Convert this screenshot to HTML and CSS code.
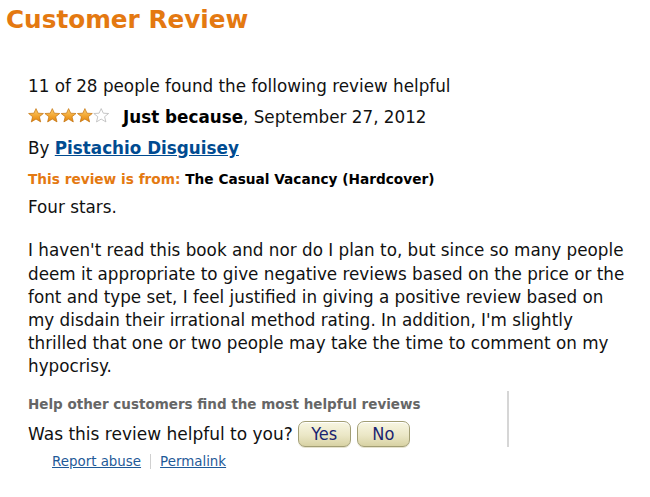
FILE: index.html
```html
<!DOCTYPE html>
<html>
<head>
<meta charset="utf-8">
<link rel="stylesheet" href="styles.css">
</head>
<body>
<h1 class="title">Customer Review</h1>
<div class="review">
  <div class="helpful-count">11 of 28 people found the following review helpful</div>
  <div class="headline"><span class="stars"><svg width="82" height="15" viewBox="0 0 82 15">
        <defs>
          <linearGradient id="g" x1="0" y1="0" x2="0" y2="1">
            <stop offset="0" stop-color="#fdd070"/>
            <stop offset="0.6" stop-color="#f1a22c"/>
            <stop offset="1" stop-color="#e0820c"/>
          </linearGradient>
          <path id="s" d="M8 0.6 L10.1 5.2 L15.4 5.5 L11.4 8.7 L12.7 13.9 L8 11.1 L3.3 13.9 L4.6 8.7 L0.6 5.5 L5.9 5.2 Z"/>
        </defs>
        <use href="#s" x="0" fill="url(#g)" stroke="#c2700a" stroke-width="0.7"/>
        <use href="#s" x="16.3" fill="url(#g)" stroke="#c2700a" stroke-width="0.7"/>
        <use href="#s" x="32.6" fill="url(#g)" stroke="#c2700a" stroke-width="0.7"/>
        <use href="#s" x="48.9" fill="url(#g)" stroke="#c2700a" stroke-width="0.7"/>
        <use href="#s" x="65.2" fill="#fff" stroke="#b8b8b8" stroke-width="0.8"/>
      </svg></span><b>Just because</b>, September 27, 2012</div>
  <div class="byline">By <a href="#" class="author">Pistachio Disguisey</a></div>
  <div class="from"><span class="from-label">This review is from:</span> The Casual Vacancy (Hardcover)</div>
  <div class="summary">Four stars.</div>
  <p class="body">I haven't read this book and nor do I plan to, but since so many people<br>deem it appropriate to give negative reviews based on the price or the<br>font and type set, I feel justified in giving a positive review based on<br>my disdain their irrational method rating. In addition, I'm slightly<br>thrilled that one or two people may take the time to comment on my<br>hypocrisy.</p>
  <div class="vote-box">
    <div class="vote-title">Help other customers find the most helpful reviews</div>
    <div class="vote-row"><span class="vote-q">Was this review helpful to you?</span><button class="btn">Yes</button><button class="btn">No</button></div>
  </div>
  <div class="links"><a href="#">Report abuse</a><span class="sep"></span><a href="#">Permalink</a></div>
</div>
</body>
</html>
```
FILE: styles.css
```css
html, body {
  margin: 0;
  padding: 0;
  background: #fff;
}
body {
  font-family: "DejaVu Sans", Verdana, sans-serif;
  color: #111;
  width: 650px;
  height: 497px;
  overflow: hidden;
}
.title {
  margin: 0;
  padding: 5px 0 0 6px;
  font-size: 24.7px;
  font-weight: bold;
  color: #e47911;
  line-height: 30px;
}
.review {
  padding: 39px 0 0 28px;
  font-size: 16.8px;
}
.helpful-count {
  line-height: 24px;
}
.headline {
  margin-top: 7px;
  line-height: 24px;
}
.headline b {
  color: #000;
}
.stars {
  display: inline-block;
  width: 82px;
  height: 15px;
  margin: 0 13px 0 0;
  vertical-align: 0px;
}
.stars svg {
  display: block;
}
.byline {
  margin-top: 7px;
  line-height: 24px;
}
.author {
  color: #004b91;
  font-weight: bold;
  text-decoration: underline;
}
.from {
  margin-top: 9px;
  font-size: 13.7px;
  font-weight: bold;
  line-height: 20px;
  color: #000;
}
.from-label {
  color: #e47911;
}
.summary {
  margin-top: 7px;
  line-height: 23.4px;
}
.body {
  margin: 20px 0 0 0;
  line-height: 23.2px;
  white-space: nowrap;
}
.vote-box {
  margin-top: 12px;
  padding-top: 3px;
  width: 479px;
  border-right: 2px solid #d6d6d6;
}
.vote-title {
  font-size: 13.5px;
  font-weight: bold;
  color: #666;
  line-height: 20px;
}
.vote-row {
  margin-top: 7px;
  display: flex;
  align-items: center;
  height: 26px;
}
.vote-q {
  font-size: 17px;
  margin-right: 5px;
}
.btn {
  font-family: "DejaVu Sans Condensed", "DejaVu Sans", sans-serif;
  font-stretch: condensed;
  font-size: 18px;
  color: #1a2470;
  height: 26px;
  width: 53px;
  padding: 0;
  margin: 0 6px 0 0;
  border: 1px solid #a29e74;
  border-radius: 7px;
  background: linear-gradient(#f8f6e2, #ebe7c6 55%, #d8d2a4);
  box-shadow: inset 0 1px 0 #fff, 0 1px 0 #e6e3cf;
  line-height: 24px;
}
.links {
  margin-top: 5px;
  padding-left: 24px;
  font-size: 13.4px;
  line-height: 20px;
  display: flex;
  align-items: center;
}
.links a {
  color: #1f5a98;
  text-decoration: underline;
}
.sep {
  display: inline-block;
  width: 1px;
  height: 15px;
  background: #d0d0d0;
  margin: 0 9px;
}
```
